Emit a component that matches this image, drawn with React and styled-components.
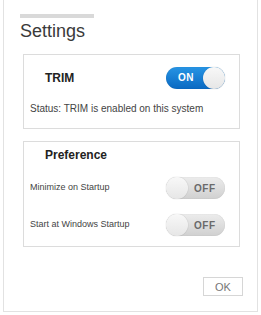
import React from "react";
import styled, { createGlobalStyle } from "styled-components";

const Global = createGlobalStyle`
  html, body {
    margin: 0;
    padding: 0;
    background: #ffffff;
  }
  body {
    font-family: "Liberation Sans", Arial, sans-serif;
  }
`;

const Frame = styled.div`
  box-sizing: border-box;
  width: 255px;
  height: 312px;
  margin-left: 3px;
  border: 1px solid #e2e2e2;
  border-top: none;
  padding: 14px 0 0 15px;
  display: flex;
  flex-direction: column;
`;

const TitleBar = styled.div`
  width: 74px;
  height: 4px;
  background: #d9d9d9;
  margin-left: 1px;
`;

const Title = styled.div`
  font-size: 18px;
  color: #3a3a3a;
  margin: 2px 0 0 1px;
  line-height: 22px;
`;

const Box = styled.div`
  box-sizing: border-box;
  width: 217px;
  margin: ${p => p.$top}px 0 0 4px;
  border: 1px solid #dcdcdc;
  padding: ${p => p.$pad};
  display: flex;
  flex-direction: column;
`;

const Row = styled.div`
  display: flex;
  align-items: center;
  justify-content: space-between;
  height: ${p => p.$h}px;
  margin-top: ${p => p.$mt || 0}px;
`;

const Heading = styled.div`
  font-size: 12px;
  font-weight: bold;
  color: #222;
  margin-left: 15px;
`;

const Label = styled.div`
  font-size: 9px;
  color: #444;
  margin-top: -3px;
`;

const Status = styled.div`
  font-size: 10px;
  line-height: 12px;
  color: #444;
  margin-top: 14px;
`;

const Toggle = styled.div`
  box-sizing: border-box;
  position: relative;
  width: 59px;
  height: 22px;
  border-radius: 11px;
  margin-right: 14px;
  display: flex;
  align-items: center;
  font-size: 10px;
  font-weight: bold;
  letter-spacing: 0.5px;
  background: ${p =>
    p.$on
      ? "linear-gradient(#2794e4, #0a69c2)"
      : "linear-gradient(#ececec, #d0d0d0)"};
  color: ${p => (p.$on ? "#fff" : "#6a6a6a")};
  padding-left: ${p => (p.$on ? 12 : 28)}px;
  box-shadow: inset 0 0 1px rgba(0, 0, 0, 0.2);
`;

const Knob = styled.div`
  position: absolute;
  top: 0;
  ${p => (p.$on ? "right: 0;" : "left: 0;")}
  width: 22px;
  height: 22px;
  border-radius: 50%;
  background: linear-gradient(#f8f8f8, #e6e6e6);
  box-shadow: 0 0 1px rgba(0, 0, 0, 0.3);
`;

const Footer = styled.div`
  display: flex;
  justify-content: flex-end;
  margin-top: 30px;
  width: 224px;
`;

const OkButton = styled.button`
  box-sizing: border-box;
  width: 40px;
  height: 19px;
  border: 1px solid #d6d6d6;
  background: #fff;
  color: #777;
  font-family: "Liberation Sans", Arial, sans-serif;
  font-size: 11px;
  padding: 0;
`;

const Switch = ({ on }) => (
  <Toggle $on={on}>
    {on ? "ON" : "OFF"}
    <Knob $on={on} />
  </Toggle>
);

export default function App() {
  return (
    <>
      <Global />
      <Frame>
        <TitleBar />
        <Title>Settings</Title>
        <Box $top={12} $pad="11px 0 13px 6px">
          <Row $h={23}>
            <Heading>TRIM</Heading>
            <Switch on />
          </Row>
          <Status>Status: TRIM is enabled on this system</Status>
        </Box>
        <Box $top={12} $pad="5px 0 10px 6px">
          <Row $h={16}>
            <Heading>Preference</Heading>
          </Row>
          <Row $h={22} $mt={14}>
            <Label>Minimize on Startup</Label>
            <Switch />
          </Row>
          <Row $h={22} $mt={15}>
            <Label>Start at Windows Startup</Label>
            <Switch />
          </Row>
        </Box>
        <Footer>
          <OkButton>OK</OkButton>
        </Footer>
      </Frame>
    </>
  );
}
